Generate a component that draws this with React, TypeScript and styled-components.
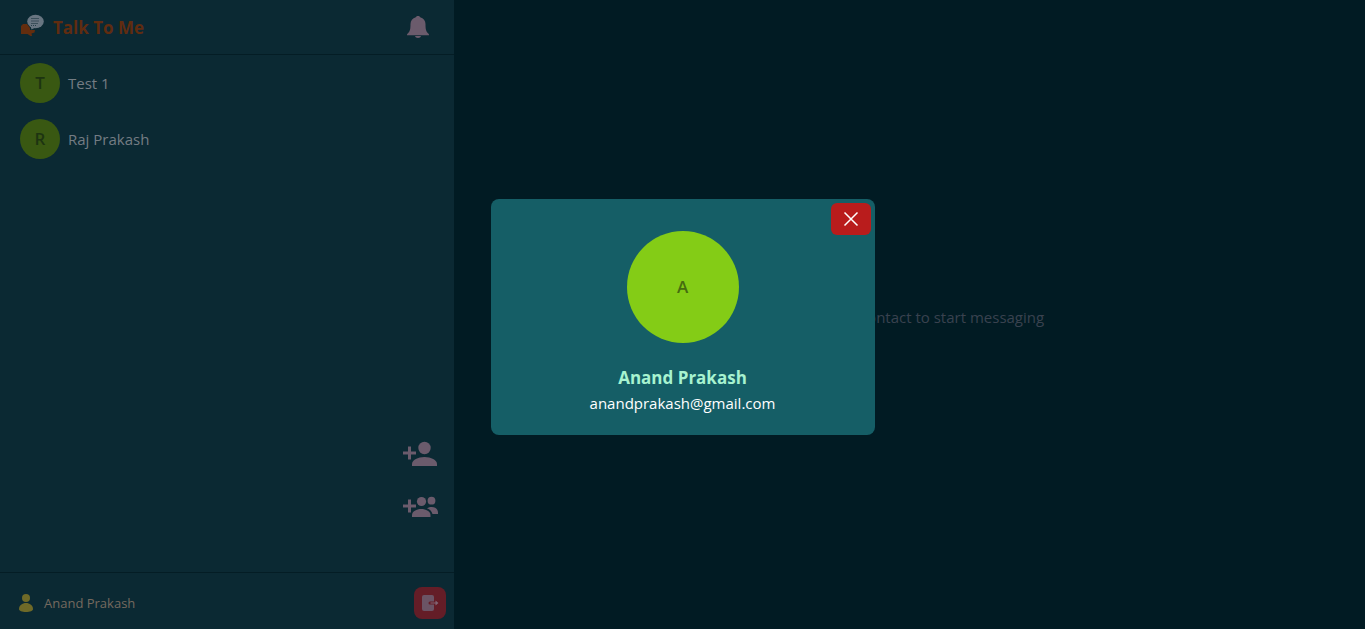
import React from "react";
import styled, { createGlobalStyle } from "styled-components";

const Global = createGlobalStyle`
  *, *::before, *::after { box-sizing: border-box; }
  body {
    margin: 0;
    background: #011b23;
    font-family: "Segoe UI", "Open Sans", "Noto Sans", sans-serif;
    font-size: 15px;
    line-height: 24px;
  }
  h1, h2, p, ul { margin: 0; padding: 0; }
  button { border: 0; padding: 0; background: none; font: inherit; cursor: pointer; }
  svg { display: block; }
`;

const Page = styled.div`
  display: flex;
  min-height: 100vh;
`;

const Sidebar = styled.aside`
  display: flex;
  flex-direction: column;
  flex: 0 0 calc(100% / 3 - 1px);
  background: #0b2933;
`;

const Header = styled.header`
  display: flex;
  align-items: center;
  justify-content: space-between;
  height: 55px;
  padding: 0 24px 0 20px;
  border-bottom: 1px solid #041d25;
`;

const Brand = styled.div`
  display: flex;
  align-items: flex-start;
  gap: 8px;
  padding-top: 2px;
`;

const BrandName = styled.h1`
  color: #602c10;
  font-size: 17px;
  font-weight: 700;
  line-height: 28px;
`;

const IconButton = styled.button`
  color: #6b5b6c;
`;

const Contacts = styled.ul`
  flex: 1;
  list-style: none;
`;

const Contact = styled.li`
  display: flex;
  align-items: center;
  gap: 8px;
  padding: 8px 20px;
  color: #747c83;
`;

const Avatar = styled.span<{ $large?: boolean }>`
  display: flex;
  align-items: center;
  justify-content: center;
  width: ${(p) => (p.$large ? 112 : 40)}px;
  height: ${(p) => (p.$large ? 112 : 40)}px;
  border-radius: 50%;
  background: ${(p) => (p.$large ? "#84cc16" : "#395812")};
  color: ${(p) => (p.$large ? "#466c10" : "#1d3411")};
  font-size: 17px;
  font-weight: 600;
`;

const Actions = styled.div`
  display: flex;
  flex-direction: column;
  align-items: flex-end;
  gap: 16px;
  padding: 0 16px 48px 0;
`;

const Footer = styled.footer`
  display: flex;
  align-items: center;
  justify-content: space-between;
  height: 57px;
  padding: 4px 8px 0 18px;
  border-top: 1px solid #041d25;
`;

const Profile = styled.button`
  display: flex;
  align-items: center;
  gap: 10px;
  color: #75695f;
  font-size: 13px;
`;

const LogoutButton = styled.button`
  display: flex;
  align-items: center;
  justify-content: center;
  width: 32px;
  height: 32px;
  border-radius: 8px;
  background: #641d27;
`;

const Main = styled.main`
  display: flex;
  flex: 1;
  align-items: center;
  justify-content: center;
  padding-top: 4px;
  color: #39424f;
`;

const Overlay = styled.div`
  position: fixed;
  inset: 0;
  display: flex;
  align-items: center;
  justify-content: center;
  padding-top: 5px;
`;

const Dialog = styled.section`
  position: relative;
  display: flex;
  flex-direction: column;
  align-items: center;
  width: 384px;
  padding: 32px 16px 20px;
  border-radius: 8px;
  background: #155e66;
`;

const DialogName = styled.h2`
  margin-top: 21px;
  color: #a7f3d0;
  font-size: 17px;
  font-weight: 700;
  line-height: 28px;
`;

const Email = styled.p`
  color: #ffffff;
  line-height: 23px;
`;

const CloseButton = styled.button`
  position: absolute;
  top: 4px;
  right: 4px;
  display: flex;
  align-items: center;
  justify-content: center;
  width: 40px;
  height: 32px;
  border-radius: 6px;
  background: #b91c1c;
`;

const LogoIcon = () => (
  <svg width="25" height="24" viewBox="0 0 25 24" aria-hidden="true">
    <path d="M1 12 3 10h4l3 4v2h5l-.5 2.500-3 1 .5 2.500h-1.500L7.500 20H1z" fill="#632d0e" />
    <ellipse cx="15.500" cy="7.500" rx="8.300" ry="6.700" fill="#687581" />
    <path d="M10.500 12l1 3.500 4-2z" fill="#687581" />
    <path d="M11 4.500h8M11 7h8M11 9.500h7" stroke="#3a4f5a" strokeWidth="1" />
    <path d="M11 11.500h1m1 0h1m1 0h1" stroke="#25404b" />
  </svg>
);

const BellIcon = () => (
  <svg width="24" height="24" viewBox="0 0 24 24" fill="currentColor" aria-hidden="true">
    <path d="M12 1c-1.300 0-2 .7-2.200 1.300C6.500 3.200 4.500 5.700 4.500 9c0 5-.5 7.500-2.500 9.200-.7.500-1 1-1 1.500v.5h22v-.5c0-.5-.3-1-1-1.500-2-1.700-2.500-4.200-2.500-9.200 0-3.300-2-5.800-5.300-6.700C14 1.700 13.300 1 12 1z" />
    <path d="M9 21h6c-.3 1.300-1.400 2-3 2s-2.700-.7-3-2z" />
  </svg>
);

const AddPersonIcon = () => (
  <svg width="37" height="36" viewBox="0 0 37 36" fill="currentColor" aria-hidden="true">
    <path d="M7 10.500h3v5h5v3h-5v5H7v-5H2v-3h5z" />
    <circle cx="23.500" cy="12" r="6.200" />
    <path d="M11 30v-2c0-4 6-7 12.500-7S36 24 36 28v2z" />
  </svg>
);

const AddGroupIcon = () => (
  <svg width="37" height="36" viewBox="0 0 37 36" fill="currentColor" aria-hidden="true">
    <path d="M7 11.500h3v5h5v3h-5v5H7v-5H2v-3h5z" />
    <circle cx="20.500" cy="13.500" r="4.600" />
    <circle cx="30.500" cy="12.700" r="3.900" />
    <path d="M11 29v-2c0-3.500 4.500-6 9.200-6s9.300 2.500 9.300 6v2z" />
    <path d="M26 20.300c1.500-.8 3-1.300 4.800-1.300 3.800 0 6.200 2.500 6.200 5.500v1.500h-5.500c-.7-2.500-2.500-4.500-5.500-5.700z" />
  </svg>
);

const PersonIcon = () => (
  <svg width="16" height="20" viewBox="0 0 16 20" fill="#6f6a28" aria-hidden="true">
    <circle cx="8" cy="5" r="4" />
    <path d="M1 16c0-3.500 3.300-6 7-6s7 2.500 7 6c0 2-3 3-7 3s-7-1-7-3z" />
  </svg>
);

const LogoutIcon = () => (
  <svg width="20" height="18" viewBox="0 0 20 18" aria-hidden="true">
    <path d="M4 1h8a2 2 0 0 1 2 2v12a2 2 0 0 1-2 2H4a2 2 0 0 1-2-2V3a2 2 0 0 1 2-2z" fill="#6b5465" />
    <path d="M10 7.500h4.500V5L19.500 9l-5 4v-2.500H10a1.500 1.500 0 0 1 0-3z" fill="#641d27" />
    <path d="M10.500 8.400h5V6.500L18.500 9l-3 2.500V9.600h-5z" fill="#806474" />
  </svg>
);

const CloseIcon = () => (
  <svg width="16" height="16" viewBox="0 0 16 16" aria-hidden="true">
    <path d="M1.500 1.500l13 13m0-13l-13 13" stroke="#fff" strokeWidth="1.500" />
  </svg>
);

const contacts = ["Test 1", "Raj Prakash"];

export default function App() {
  return (
    <>
      <Global />
      <Page>
        <Sidebar>
          <Header>
            <Brand>
              <LogoIcon />
              <BrandName>Talk To Me</BrandName>
            </Brand>
            <IconButton aria-label="Notifications">
              <BellIcon />
            </IconButton>
          </Header>
          <Contacts>
            {contacts.map((name) => (
              <Contact key={name}>
                <Avatar>{name[0]}</Avatar>
                {name}
              </Contact>
            ))}
          </Contacts>
          <Actions>
            <IconButton aria-label="Add contact">
              <AddPersonIcon />
            </IconButton>
            <IconButton aria-label="Create group">
              <AddGroupIcon />
            </IconButton>
          </Actions>
          <Footer>
            <Profile>
              <PersonIcon />
              Anand Prakash
            </Profile>
            <LogoutButton aria-label="Log out">
              <LogoutIcon />
            </LogoutButton>
          </Footer>
        </Sidebar>
        <Main>
          <p>Choose any contact to start messaging</p>
        </Main>
      </Page>
      <Overlay>
        <Dialog role="dialog" aria-modal="true" aria-labelledby="profile-name">
          <CloseButton aria-label="Close">
            <CloseIcon />
          </CloseButton>
          <Avatar $large>A</Avatar>
          <DialogName id="profile-name">Anand Prakash</DialogName>
          <Email>anandprakash@gmail.com</Email>
        </Dialog>
      </Overlay>
    </>
  );
}
